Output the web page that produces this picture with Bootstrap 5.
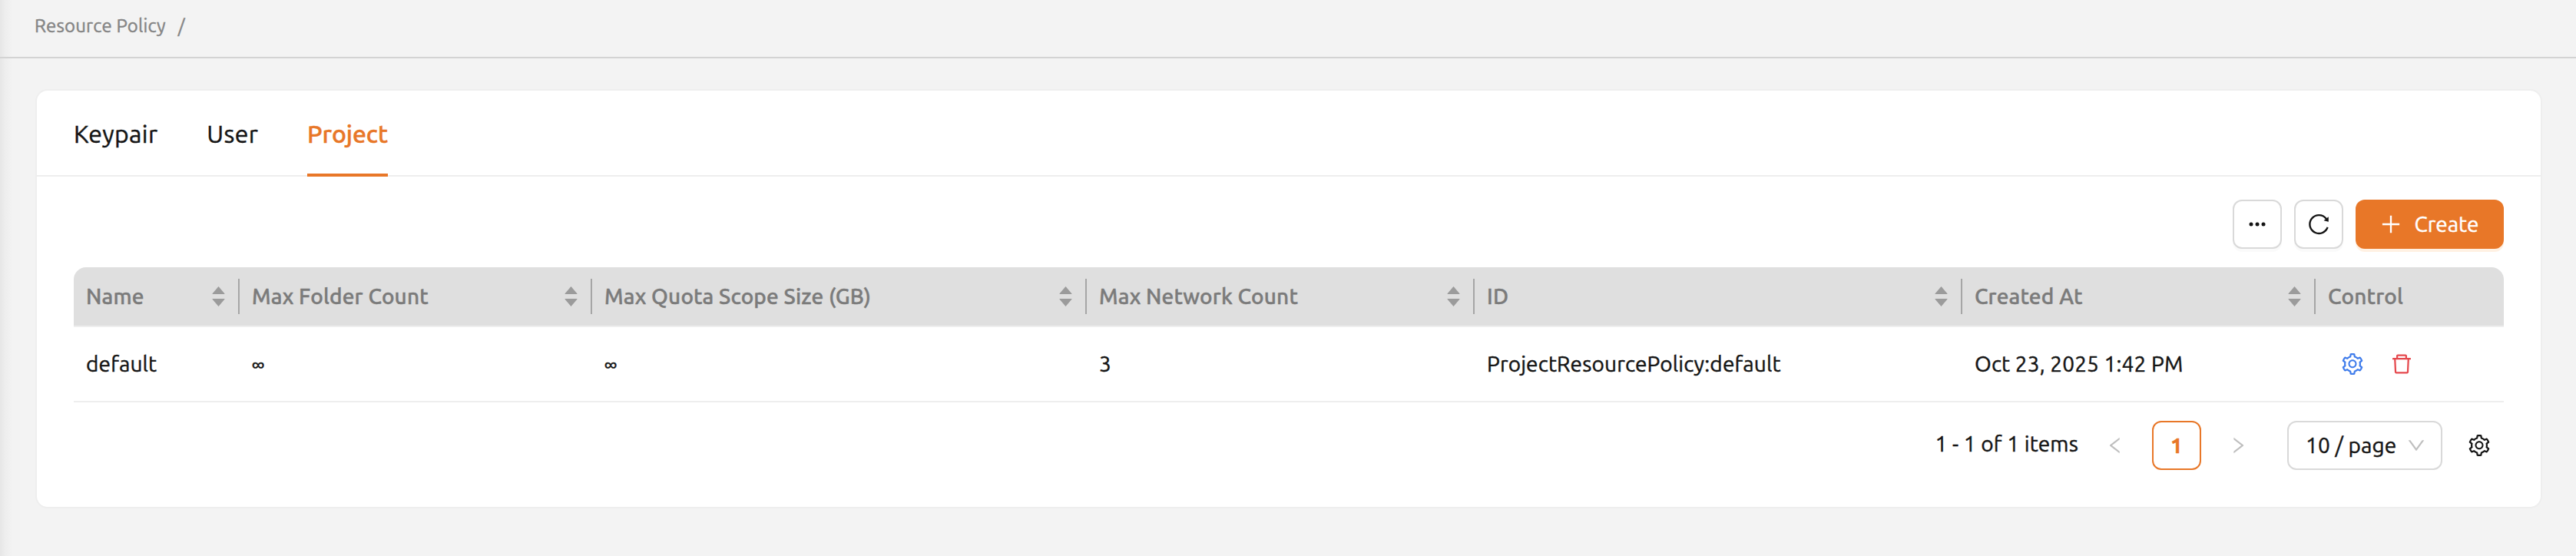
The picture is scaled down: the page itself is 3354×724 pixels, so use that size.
<!DOCTYPE html>
<html lang="en">
<head>
<meta charset="utf-8">
<meta name="viewport" content="width=device-width, initial-scale=1">
<title>Resource Policy</title>
<link href="https://cdn.jsdelivr.net/npm/bootstrap@5.3.0/dist/css/bootstrap.min.css" rel="stylesheet">
<style>
body{font-family:Ubuntu,"Noto Sans",sans-serif;font-size:28px;line-height:44px;letter-spacing:.15px;-webkit-text-stroke:.45px currentColor;color:#141414;background:#f3f3f3}
svg{display:block;fill:currentColor;flex:none}
.page-shell{height:724px;background:linear-gradient(90deg,#e6e6e6 0,#ededed 6px,#f3f3f3 16px)}
.crumbs{height:76px;border-bottom:2px solid #d3d3d3;padding:0 47px 6px 45px;font-size:24px;color:#858585;gap:16px}
.policy-card{margin:40px 44px 0 46px;height:546px;border:2px solid #eee;border-radius:16px;color:inherit}
.policy-tabs{height:112px;border-bottom:2px solid #eee;padding-left:48px;gap:64px;font-size:32px;letter-spacing:.3px}
.policy-tabs .nav-link{padding:0;height:112px;line-height:112px;color:#141414}
.policy-tabs .nav-link.active{color:#e87728;font-weight:500;letter-spacing:-.1px;border-bottom:4px solid #e87728}
.policy-body{padding:30px 48px 0}
.toolbar{gap:16px;margin-bottom:24px}
.tool-btn{width:64px;height:64px;padding:0;border:2px solid #d9d9d9;border-radius:12px;background:#fff;color:#141414;box-shadow:0 4px 0 rgba(0,0,0,.02)}
.create-btn{width:193px;height:64px;padding:0;border:0;border-radius:12px;background:#e87728;color:#fff;font-size:28px;gap:16px;box-shadow:0 4px 0 #fff1e3}
.policy-table{table-layout:fixed;margin:0;width:3164px;border-collapse:separate;border-spacing:0;color:inherit}
.policy-table th,.policy-table td{padding:0 16px;border-bottom:2px solid #eee;vertical-align:middle;color:inherit}
.policy-table th{height:78px;background:#dfdfdf;color:#7b7b7b;font-weight:500;padding-right:0}
.policy-table td{height:98px;background:#fff}
.policy-table th:first-child{border-top-left-radius:16px}
.policy-table th:last-child{border-top-right-radius:16px}
.head-cell{height:46px;padding-right:17px;border-right:2px solid #a6a6a6}
.policy-table th:last-child .head-cell{border-right:0}
.head-cell svg{fill:#9b9b9b}
.row-actions{gap:36px;padding-left:18px}
.pager{margin-top:24px;height:64px;padding-right:18px}
.pager-total{padding-bottom:4px}
.pager-step{width:64px;color:#bfbfbf}
.pager-current{width:64px;height:64px;border:2px solid #e87728;border-radius:12px;color:#e87728;font-weight:700}
.page-size{width:202px;height:64px;border:2px solid #d9d9d9;border-radius:12px;padding:0 20px 0 22px;margin-left:32px;margin-right:34px}
.page-size svg{color:#bfbfbf}
</style>
</head>
<body>
<svg class="d-none">
  <symbol id="gear" viewBox="64 64 896 896"><path d="M924.8 625.7l-65.5-56c3.1-19 4.7-38.4 4.7-57.8s-1.6-38.8-4.7-57.8l65.5-56a32.03 32.03 0 009.3-35.2l-.9-2.6a443.74 443.74 0 00-79.7-137.9l-1.8-2.1a32.12 32.12 0 00-35.1-9.5l-81.3 28.9c-30-24.6-63.5-44-99.7-57.6l-15.7-85a32.05 32.05 0 00-25.8-25.7l-2.7-.5c-52.1-9.4-106.9-9.4-159 0l-2.7.5a32.05 32.05 0 00-25.8 25.7l-15.8 85.4a351.86 351.86 0 00-99 57.4l-81.9-29.1a32 32 0 00-35.1 9.5l-1.8 2.1a446.02 446.02 0 00-79.7 137.9l-.9 2.6c-4.5 12.5-.8 26.5 9.3 35.2l66.3 56.6c-3.1 18.8-4.6 38-4.6 57.1 0 19.2 1.5 38.4 4.6 57.1L99 625.5a32.03 32.03 0 00-9.3 35.2l.9 2.6c18.1 50.4 44.9 96.9 79.7 137.9l1.8 2.1a32.12 32.12 0 0035.1 9.5l81.9-29.1c29.8 24.5 63.1 43.9 99 57.4l15.8 85.4a32.05 32.05 0 0025.8 25.7l2.7.5a449.4 449.4 0 00159 0l2.7-.5a32.05 32.05 0 0025.8-25.7l15.7-85a350 350 0 0099.7-57.6l81.3 28.9a32 32 0 0035.1-9.5l1.8-2.1c34.8-41.1 61.6-87.5 79.7-137.9l.9-2.6c4.5-12.3.8-26.3-9.3-35zM788.3 465.9c2.5 15.1 3.8 30.6 3.8 46.1s-1.3 31-3.8 46.1l-6.6 40.1 74.7 63.9a370.03 370.03 0 01-42.6 73.6L721 702.8l-31.4 25.8c-23.9 19.6-50.5 35-79.3 45.8l-38.1 14.3-17.9 97a377.5 377.5 0 01-85 0l-17.9-97.2-37.8-14.5c-28.5-10.8-55-26.2-78.7-45.7l-31.4-25.9-93.4 33.2c-17-22.9-31.2-47.6-42.6-73.6l75.5-64.5-6.5-40c-2.4-14.9-3.7-30.3-3.7-45.5 0-15.3 1.2-30.6 3.7-45.5l6.5-40-75.5-64.5c11.3-26.1 25.6-50.7 42.6-73.6l93.4 33.2 31.4-25.9c23.7-19.5 50.2-34.9 78.7-45.7l37.9-14.3 17.9-97.2c28.1-3.2 56.8-3.2 85 0l17.9 97 38.1 14.3c28.7 10.8 55.4 26.2 79.3 45.8l31.4 25.8 92.8-32.9c17 22.9 31.2 47.6 42.6 73.6L781.8 426l6.5 39.9zM512 326c-97.2 0-176 78.8-176 176s78.8 176 176 176 176-78.8 176-176-78.8-176-176-176zm79.2 255.2A111.6 111.6 0 01512 614c-29.9 0-58-11.7-79.2-32.8A111.6 111.6 0 01400 502c0-29.9 11.7-58 32.8-79.2C454 401.6 482.1 390 512 390c29.9 0 58 11.6 79.2 32.8A111.6 111.6 0 01624 502c0 29.9-11.7 58-32.8 79.2z"/></symbol>
  <symbol id="sorter" viewBox="0 0 17 26"><path d="M8.5 0 L16.4 9.2 Q17 10 16 10 H1 Q0 10 .6 9.2Z M8.5 26 L16.4 16.8 Q17 16 16 16 H1 Q0 16 .6 16.8Z"/></symbol>
</svg>
<div class="page-shell overflow-hidden">
  <nav class="crumbs d-flex align-items-center"><span>Resource Policy</span><span>/</span></nav>

  <main class="card policy-card">
    <div class="policy-tabs nav flex-nowrap">
      <a class="nav-link">Keypair</a>
      <a class="nav-link">User</a>
      <a class="nav-link active">Project</a>
    </div>
    <div class="policy-body">
      <div class="toolbar d-flex justify-content-end">
        <button class="btn tool-btn d-flex align-items-center justify-content-center" aria-label="More">
          <svg width="28" height="28" viewBox="0 0 28 28"><circle cx="6" cy="14" r="2.5"/><circle cx="14" cy="14" r="2.5"/><circle cx="22" cy="14" r="2.5"/></svg>
        </button>
        <button class="btn tool-btn d-flex align-items-center justify-content-center" aria-label="Reload">
          <svg width="28" height="28" viewBox="64 64 896 896"><path d="M909.1 209.3l-56.4 44.1C775.8 155.1 656.2 92 521.9 92 290 92 102.3 279.5 102 511.5 101.7 743.7 289.8 932 521.9 932c181.3 0 335.8-115 394.6-276.1 1.5-4.2-.7-8.9-4.9-10.3l-56.7-19.5a8 8 0 00-10.1 4.8c-1.8 5-3.8 10-5.9 14.9-17.3 41-42.1 77.8-73.7 109.4A344.77 344.77 0 01655.9 829c-42.3 17.9-87.4 27-133.8 27-46.5 0-91.5-9.1-133.8-27A341.5 341.5 0 01279 755.2a342.16 342.16 0 01-73.7-109.4c-17.9-42.4-27-87.4-27-133.9s9.1-91.5 27-133.9c17.3-41 42.1-77.8 73.7-109.4 31.6-31.6 68.4-56.4 109.3-73.8 42.3-17.9 87.4-27 133.8-27 46.5 0 91.5 9.1 133.8 27a341.5 341.5 0 01109.3 73.8c9.9 9.9 19.2 20.4 27.8 31.4l-60.2 47a8 8 0 003 14.1l175.6 43c5 1.2 9.9-2.6 9.9-7.7l.8-180.9c-.1-6.6-7.8-10.3-13-6.2z"/></svg>
        </button>
        <button class="btn create-btn d-flex align-items-center justify-content-center">
          <svg width="28" height="28" viewBox="64 64 896 896"><path d="M474 152h76v322h318v76H550v322h-76V550H156v-76h318z"/></svg>
          <span>Create</span>
        </button>
      </div>

      <table class="table policy-table">
        <colgroup><col style="width:216px"><col style="width:459px"><col style="width:644px"><col style="width:505px"><col style="width:635px"><col style="width:460px"><col style="width:245px"></colgroup>
        <thead>
          <tr>
            <th><div class="head-cell d-flex align-items-center justify-content-between">Name<svg width="17" height="26"><use href="#sorter"/></svg></div></th>
            <th><div class="head-cell d-flex align-items-center justify-content-between">Max Folder Count<svg width="17" height="26"><use href="#sorter"/></svg></div></th>
            <th><div class="head-cell d-flex align-items-center justify-content-between">Max Quota Scope Size (GB)<svg width="17" height="26"><use href="#sorter"/></svg></div></th>
            <th><div class="head-cell d-flex align-items-center justify-content-between">Max Network Count<svg width="17" height="26"><use href="#sorter"/></svg></div></th>
            <th><div class="head-cell d-flex align-items-center justify-content-between">ID<svg width="17" height="26"><use href="#sorter"/></svg></div></th>
            <th><div class="head-cell d-flex align-items-center justify-content-between">Created At<svg width="17" height="26"><use href="#sorter"/></svg></div></th>
            <th><div class="head-cell d-flex align-items-center">Control</div></th>
          </tr>
        </thead>
        <tbody>
          <tr>
            <td>default</td>
            <td>∞</td>
            <td>∞</td>
            <td>3</td>
            <td>ProjectResourcePolicy:default</td>
            <td>Oct 23, 2025 1:42 PM</td>
            <td>
              <div class="row-actions d-flex">
                <svg width="28" height="28" style="color:#3f7ceb"><use href="#gear"/></svg>
                <svg width="28" height="28" viewBox="64 64 896 896" style="color:#e5484d"><path d="M360 184h-8c4.4 0 8-3.6 8-8v8h304v-8c0 4.4 3.6 8 8 8h-8v72h72v-80c0-35.3-28.7-64-64-64H352c-35.3 0-64 28.7-64 64v80h72v-72zm504 72H160c-17.7 0-32 14.3-32 32v32c0 4.4 3.6 8 8 8h60.4l24.7 523c1.6 34.1 29.8 61 63.9 61h454c34.2 0 62.3-26.8 63.9-61l24.7-523H888c4.4 0 8-3.6 8-8v-32c0-17.7-14.3-32-32-32zM731.3 840H292.7l-24.2-512h487l-24.2 512z"/></svg>
              </div>
            </td>
          </tr>
        </tbody>
      </table>

      <div class="pager d-flex align-items-center justify-content-end">
        <span class="pager-total me-3">1 - 1 of 1 items</span>
        <span class="pager-step d-flex justify-content-center me-3"><svg width="24" height="24" viewBox="64 64 896 896"><path d="M724 218.3V141c0-6.7-7.7-10.4-12.9-6.3L260.3 486.8a31.86 31.86 0 000 50.3l450.8 352.1c5.3 4.1 12.9.4 12.9-6.3v-77.3c0-4.9-2.3-9.6-6.1-12.6l-360-281 360-281.1c3.8-3 6.1-7.7 6.1-12.6z"/></svg></span>
        <span class="pager-current d-flex align-items-center justify-content-center me-3">1</span>
        <span class="pager-step d-flex justify-content-center"><svg width="24" height="24" viewBox="64 64 896 896"><path d="M765.7 486.8L314.9 134.7A7.97 7.97 0 00302 141v77.3c0 4.9 2.3 9.6 6.1 12.6l360 281.1-360 281.1c-3.9 3-6.1 7.7-6.1 12.6V883c0 6.7 7.7 10.4 12.9 6.3l450.8-352.1a31.96 31.96 0 000-50.4z"/></svg></span>
        <span class="page-size d-flex align-items-center justify-content-between">10 / page<svg width="24" height="24" viewBox="64 64 896 896"><path d="M884 256h-75c-5.1 0-9.9 2.5-12.9 6.6L512 654.2 227.9 262.6c-3-4.1-7.8-6.6-12.9-6.6h-75c-6.5 0-10.3 7.4-6.5 12.7l352.6 486.1c12.8 17.6 39 17.6 51.7 0l352.6-486.1c3.9-5.3.1-12.7-6.4-12.7z"/></svg></span>
        <svg width="28" height="28"><use href="#gear"/></svg>
      </div>
    </div>
  </main>
</div>
<script src="https://cdn.jsdelivr.net/npm/bootstrap@5.3.0/dist/js/bootstrap.bundle.min.js"></script>
</body>
</html>
